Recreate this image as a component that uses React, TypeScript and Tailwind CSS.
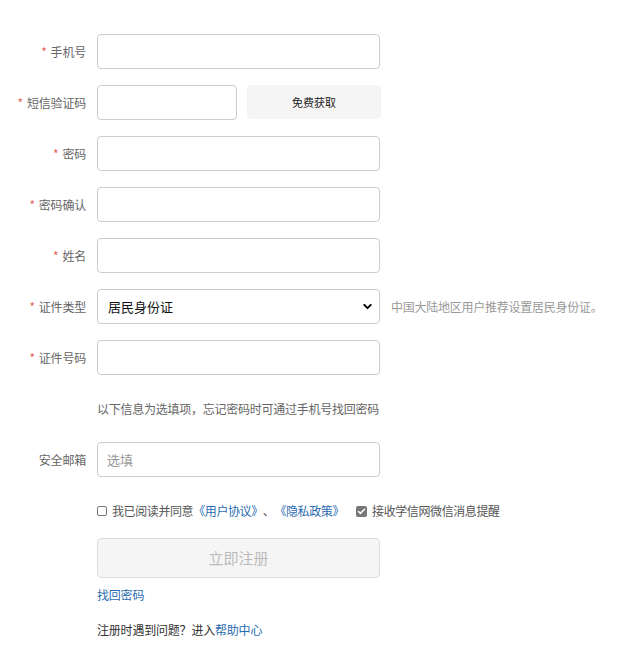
import { ChevronDown, Check } from "lucide-react"

const font = { fontFamily: '"Microsoft YaHei", "Noto Sans CJK SC", "Noto Sans", sans-serif' }

function Label({ text, required = true }: { text: string; required?: boolean }) {
  return (
    <div className="flex w-[87px] shrink-0 items-center justify-end pr-[1px] text-[12px] tracking-[-0.2px] text-[#666]">
      {required && <span className="mr-[4px] text-[#e2635a]">*</span>}
      {text}
    </div>
  )
}

function Row({ children }: { children: React.ReactNode }) {
  return <div className="mb-[16px] flex h-[35px] items-stretch gap-[10px]">{children}</div>
}

function Input({ className = "", placeholder }: { className?: string; placeholder?: string }) {
  return (
    <input
      placeholder={placeholder}
      className={
        "h-[35px] rounded-[4px] border border-[#ccc] bg-white px-[9px] text-[13px] text-[#333] outline-none placeholder:text-[#999] " +
        className
      }
    />
  )
}

export default function App() {
  return (
    <div className="min-h-[660px] w-[617px] bg-white pt-[34px]" style={font}>
      <Row>
        <Label text="手机号" />
        <Input className="w-[283px]" />
      </Row>
      <Row>
        <Label text="短信验证码" />
        <Input className="w-[140px]" />
        <button className="h-[34px] w-[134px] rounded-[4px] bg-[#f5f5f5] text-[11px] text-[#222]">
          免费获取
        </button>
      </Row>
      <Row>
        <Label text="密码" />
        <Input className="w-[283px]" />
      </Row>
      <Row>
        <Label text="密码确认" />
        <Input className="w-[283px]" />
      </Row>
      <Row>
        <Label text="姓名" />
        <Input className="w-[283px]" />
      </Row>
      <Row>
        <Label text="证件类型" />
        <div className="relative w-[283px]">
          <select className="h-[35px] w-full appearance-none rounded-[4px] border border-[#ccc] bg-white pl-[10px] text-[13px] text-[#111] outline-none">
            <option>居民身份证</option>
          </select>
          <ChevronDown
            className="pointer-events-none absolute right-[6px] top-[11px] h-[13px] w-[13px] text-black"
            strokeWidth={3.5}
          />
        </div>
        <div className="flex items-center pl-[1px] text-[12px] tracking-[-0.25px] text-[#999]">
          中国大陆地区用户推荐设置居民身份证。
        </div>
      </Row>
      <Row>
        <Label text="证件号码" />
        <Input className="w-[283px]" />
      </Row>
      <Row>
        <div className="w-[87px] shrink-0" />
        <div className="flex items-center text-[12px] tracking-[-0.25px] text-[#666]">
          以下信息为选填项，忘记密码时可通过手机号找回密码
        </div>
      </Row>
      <Row>
        <Label text="安全邮箱" required={false} />
        <Input className="w-[283px]" placeholder="选填" />
      </Row>

      <div className="ml-[97px] mt-[24px] flex h-[20px] items-center text-[12px] tracking-[-0.4px] text-[#555]">
        <span className="mr-[5px] h-[10px] w-[10px] rounded-[2px] border border-[#777] bg-white" />
        我已阅读并同意
        <span className="text-[#2a6cb0]">《用户协议》</span>
        、
        <span className="text-[#2a6cb0]">《隐私政策》</span>
        <span className="ml-[12px] mr-[5px] flex h-[11px] w-[11px] items-center justify-center rounded-[2px] bg-[#777]">
          <Check className="h-[9px] w-[9px] text-white" strokeWidth={4} />
        </span>
        接收学信网微信消息提醒
      </div>

      <button className="ml-[97px] mt-[17px] h-[40px] w-[283px] rounded-[4px] border border-[#ddd] bg-[#f5f5f5] text-[15px] text-[#bbb]">
        立即注册
      </button>

      <div className="ml-[97px] mt-[7px] flex h-[20px] items-center text-[12px] tracking-[-0.2px] text-[#2a6cb0]">
        找回密码
      </div>
      <div className="ml-[97px] mt-[15px] flex h-[20px] items-center text-[12px] tracking-[-0.2px] text-[#333]">
        注册时遇到问题？进入<span className="text-[#2a6cb0]">帮助中心</span>
      </div>
    </div>
  )
}
